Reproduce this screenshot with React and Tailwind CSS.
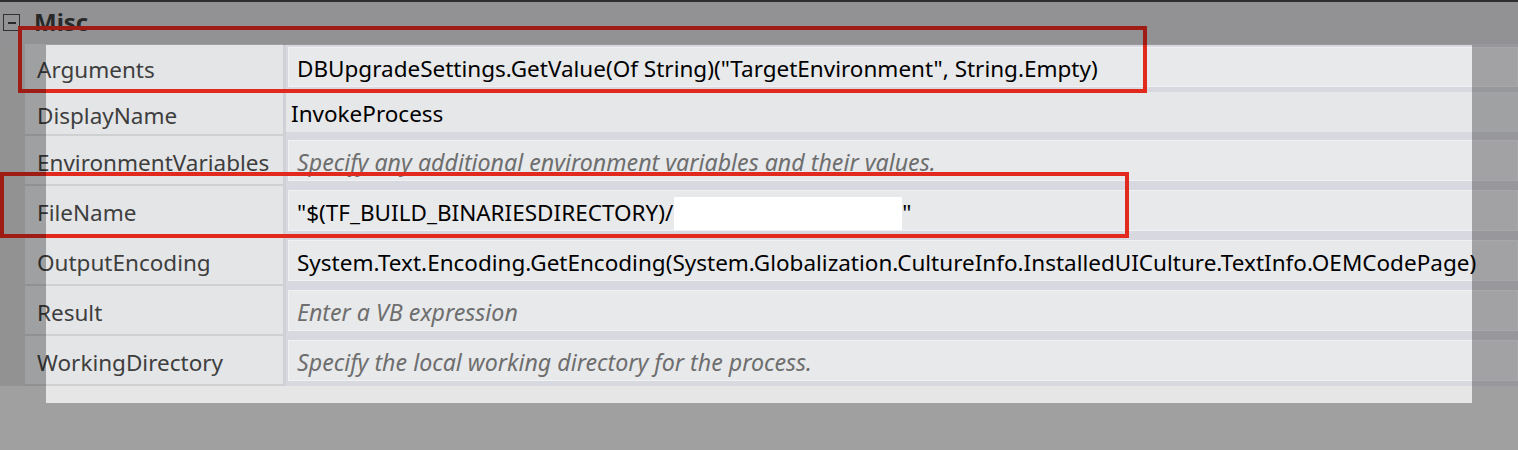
const rows = [
  { name: 'Arguments', h: 'h-[48px]', value: 'DBUpgradeSettings.GetValue(Of String)("TargetEnvironment", String.Empty)', top: true },
  { name: 'DisplayName', h: 'h-[44px]', value: 'InvokeProcess', plain: true },
  { name: 'EnvironmentVariables', h: 'h-[50px]', hint: 'Specify any additional environment variables and their values.' },
  { name: 'FileName', h: 'h-[50px]', file: true },
  { name: 'OutputEncoding', h: 'h-[50px]', value: 'System.Text.Encoding.GetEncoding(System.Globalization.CultureInfo.InstalledUICulture.TextInfo.OEMCodePage)' },
  { name: 'Result', h: 'h-[50px]', hint: 'Enter a VB expression' },
  { name: 'WorkingDirectory', h: 'h-[50px]', hint: 'Specify the local working directory for the process.' },
];

function ValueBox({ row }) {
  if (row.plain) {
    return (
      <div className="flex-1 flex items-center pl-[5px] pt-[3px] bg-[#e6e7e9] border-b-4 border-[#d8d8e0] text-black">
        {row.value}
      </div>
    );
  }
  return (
    <div className={`flex-1 flex flex-col bg-[#d8d8e0] pl-[2px] pb-[5px] ${row.top ? 'pt-[3px]' : 'pt-[4px]'}`}>
      <div className="flex-1 flex items-center pl-[8px] pt-[4px] bg-[#e8e9eb] border border-[#f0f1f3] whitespace-nowrap">
        {row.hint && <span className="italic text-[23.2px] text-[#6e6e6e]">{row.hint}</span>}
        {row.value && <span className="text-black">{row.value}</span>}
        {row.file && (
          <>
            <span className="text-black">"$(TF_BUILD_BINARIESDIRECTORY)/</span>
            <span className="inline-block w-[228px] h-[33px] mt-[2px] ml-[1px] bg-white" />
            <span className="text-black">"</span>
          </>
        )}
      </div>
    </div>
  );
}

export default function App() {
  return (
    <div className="relative w-[1518px] h-[450px] overflow-hidden bg-[#e5e6e5] font-['Noto_Sans',sans-serif] text-[22.5px]">
      <div className="h-[2px] bg-[#424242]" />

      {/* category header */}
      <div className="h-[42px] flex items-start bg-[#d1d1d4]">
        <div className="mt-[12px] ml-[3px] w-[17px] h-[17px] border-[1.5px] border-[#454545] flex items-center justify-center">
          <div className="w-[8px] h-[2px] bg-[#3a3a3a]" />
        </div>
        <span className="ml-[14px] mt-[2px] font-bold text-[24px] text-[#3a3a3a]">Misc</span>
      </div>

      {/* property rows */}
      <div className="flex">
        <div className="w-[25px] shrink-0 bg-[#d2d2d2]" />
        <div className="flex-1 flex flex-col">
          {rows.map((row) => (
            <div key={row.name} className={`flex ${row.h}`}>
              <div className="w-[258px] shrink-0 flex items-center pl-[12px] pt-[6px] bg-[#e4e5e7] border-b-2 border-[#cfd0d2] text-[#3e3e3e]">
                {row.name}
              </div>
              <div className="w-[3px] shrink-0 bg-[#d0d0d6]" />
              <ValueBox row={row} />
            </div>
          ))}
        </div>
      </div>

      {/* annotations */}
      <div className="absolute left-[18px] top-[26px] w-[1129px] h-[67px] border-4 border-[#e2291d]" />
      <div className="absolute left-0 top-[172px] w-[1129px] h-[66px] border-4 border-[#e2291d]" />

      {/* dimming mask with highlighted hole */}
      <div className="absolute left-[46px] top-[45px] w-[1426px] h-[358px] shadow-[0_0_0_2000px_rgba(0,0,0,0.3)]" />
    </div>
  );
}
